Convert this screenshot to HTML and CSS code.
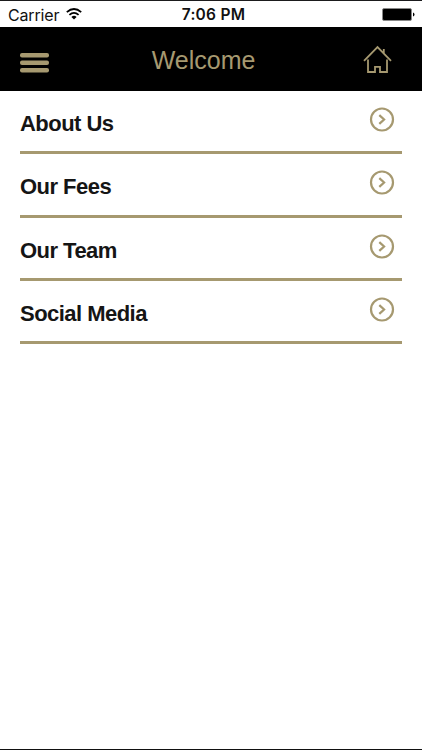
FILE: index.html
```html
<!DOCTYPE html>
<html lang="en">
<head>
<meta charset="utf-8">
<title>Welcome</title>
<link rel="stylesheet" href="styles.css">
</head>
<body>
<div class="screen">
  <div class="status">
    <div class="carrier"><span>Carrier</span>
      <svg width="16" height="12" viewBox="0 0 16 12" fill="none" stroke="#000" stroke-width="1.8"><path d="M.8 4.1Q8-2.2 15.2 4.1M3.4 6.9Q8 2.8 12.6 6.9"/><path d="M5.4 8.9Q8 6.8 10.6 8.9L8 11.6Z" fill="#000" stroke="none"/></svg>
    </div>
    <div class="time">7:06 PM</div>
    <svg class="battery" width="33" height="14" viewBox="0 0 33 14"><rect x=".5" y=".5" width="29" height="12" rx="1.5" fill="#000" stroke="#888"/><path d="M31 4.5q1.5.5 1.5 2t-1.5 2z"/></svg>
  </div>
  <header class="header">
    <svg class="menu" width="29" height="20" viewBox="0 0 29 20"><rect width="29" height="4.6" rx="2"/><rect y="7.5" width="29" height="4.6" rx="2"/><rect y="15" width="29" height="4.6" rx="2"/></svg>
    <h1>Welcome</h1>
    <svg class="home" width="29" height="29" viewBox="0 0 29 29"><path d="M1 15.8 14.5 2 28 15.8M20.8 8V4M5 14.5V27h7v-5.2h5V27h7V14.5"/></svg>
  </header>
  <ul class="list">
    <li><span>About Us</span><svg width="26" height="26" viewBox="0 0 26 26"><circle cx="13" cy="12.5" r="11"/><path d="m10.3 8.1 4.8 4.4-4.8 4.4"/></svg></li>
    <li><span>Our Fees</span><svg width="26" height="26" viewBox="0 0 26 26"><circle cx="13" cy="12.5" r="11"/><path d="m10.3 8.1 4.8 4.4-4.8 4.4"/></svg></li>
    <li><span>Our Team</span><svg width="26" height="26" viewBox="0 0 26 26"><circle cx="13" cy="12.5" r="11"/><path d="m10.3 8.1 4.8 4.4-4.8 4.4"/></svg></li>
    <li><span>Social Media</span><svg width="26" height="26" viewBox="0 0 26 26"><circle cx="13" cy="12.5" r="11"/><path d="m10.3 8.1 4.8 4.4-4.8 4.4"/></svg></li>
  </ul>
</div>
</body>
</html>
```
FILE: styles.css
```css
* { box-sizing: border-box; }
body { margin: 0; background: #fff; font-family: "Liberation Sans", Arial, sans-serif; }
.screen { height: 750px; overflow: hidden; border-top: 1px solid #1b1b1d; border-bottom: 1px solid #111; }
.status {
  display: grid;
  grid-template-columns: 1fr auto 1fr;
  height: 26px;
  padding: 0 7px 0 8px;
  font: 16px/28px Inter, sans-serif;
  color: #111;
}
.carrier { display: flex; gap: 7px; }
.carrier span { width: 51px; letter-spacing: -0.15px; white-space: nowrap; }
.carrier svg { margin-top: 7px; }
.time { font-weight: 600; font-size: 15.5px; letter-spacing: 0.25px; padding-left: 4px; }
.battery { justify-self: end; margin-top: 7px; }
.header {
  display: grid;
  grid-template-columns: 29px 1fr 29px;
  height: 64px;
  padding: 0 30px 0 20px;
  background: #000;
}
.menu { margin-top: 26px; fill: #a69970; }
.header h1 {
  margin: 19px 0 0;
  padding-right: 5px;
  text-align: center;
  font-weight: 400;
  font-size: 25px;
  line-height: 29px;
  color: #a69970;
}
.home { margin-top: 18px; fill: none; stroke: #a69970; stroke-width: 1.8; }
.list { list-style: none; margin: 0; padding: 0 20px; }
.list li {
  display: flex;
  justify-content: space-between;
  height: 63.25px;
  padding: 16px 7px 0 0;
  border-bottom: 3px solid #a69970;
}
.list span { padding-top: 5px; font-weight: 700; font-size: 22px; letter-spacing: -0.53px; line-height: 24px; color: #151515; }
.list svg { fill: none; stroke: #a69970; stroke-width: 2.2; }
```
